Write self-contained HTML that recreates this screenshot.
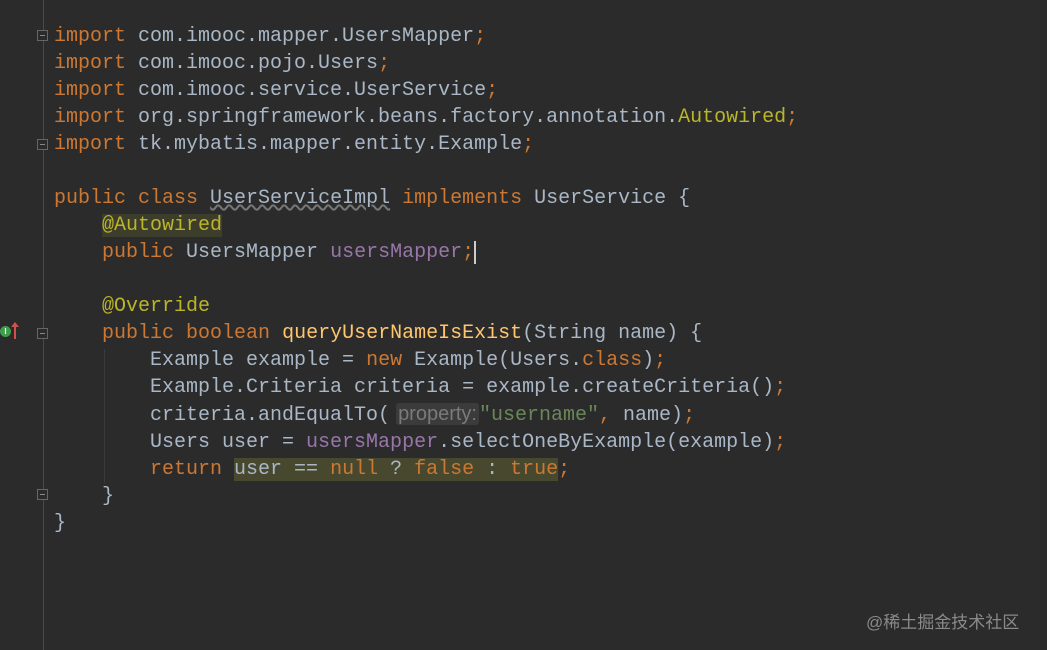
<!DOCTYPE html>
<html><head><meta charset="utf-8"><style>
body{margin:0;width:1047px;height:650px;background:#2b2b2b;overflow:hidden;position:relative}
.g{position:absolute;left:43px;top:0;width:1px;height:650px;background:#4a4a4a}
pre{position:absolute;left:54px;top:23px;margin:0;font-family:"Liberation Mono","DejaVu Sans Mono",monospace;font-size:20px;line-height:27px;color:#a9b7c6}
.k{color:#cc7832}.a{color:#bbb529}.f{color:#9876aa}.s{color:#6a8759}.m{color:#ffc66d}
.hl{background:#3d3d2b}.hr{background:#48482f}
.h{font-family:"Liberation Sans",sans-serif;font-size:20px;color:#7a7a7a;background:#3b3b3b;border-radius:3px;padding:0 2px;margin-left:-6px}
.fold{position:absolute;left:37px;width:11px;height:11px;border:1px solid #666;box-sizing:border-box;background:#2b2b2b}
.fold:after{content:"";position:absolute;left:2px;top:4px;width:5px;height:1px;background:#888}
.w{position:absolute;left:866px;top:608px;font-family:"Liberation Sans","Noto Sans CJK SC",sans-serif;font-size:17px;color:#8a8a8a}
.il{position:absolute;left:104px;width:1px;background:#3a3a3a}
</style></head><body>
<div class="g"></div>
<div class="fold" style="top:30px"></div>
<div class="fold" style="top:139px"></div>
<div class="fold" style="top:328px"></div>
<div class="fold" style="top:489px"></div>
<div class="il" style="top:349px;height:134px"></div>
<div style="position:absolute;left:0;top:326px;width:11px;height:11px;border-radius:50%;background:#3c9e4a;color:#fff;font:bold 8px 'Liberation Sans',sans-serif;text-align:center;line-height:11px">I</div>
<div style="position:absolute;left:14px;top:323px;width:2px;height:16px;background:#d05050"></div>
<div style="position:absolute;left:11px;top:322px;width:0;height:0;border-left:4px solid transparent;border-right:4px solid transparent;border-bottom:5px solid #d05050"></div>
<pre><span class="k">import</span> com.imooc.mapper.UsersMapper<span class="k">;</span>
<span class="k">import</span> com.imooc.pojo.Users<span class="k">;</span>
<span class="k">import</span> com.imooc.service.UserService<span class="k">;</span>
<span class="k">import</span> org.springframework.beans.factory.annotation.<span class="a">Autowired</span><span class="k">;</span>
<span class="k">import</span> tk.mybatis.mapper.entity.Example<span class="k">;</span>

<span class="k">public class</span> <span style="text-decoration:underline wavy #777;color:#a9b7c6">UserServiceImpl</span> <span class="k">implements</span> UserService {
    <span class="a hl">@Autowired</span>
    <span class="k">public</span> UsersMapper <span class="f">usersMapper</span><span class="k">;</span><span style="border-left:2px solid #ccc"></span>

    <span class="a">@Override</span>
    <span class="k">public boolean</span> <span class="m">queryUserNameIsExist</span>(String name) {
        Example example = <span class="k">new</span> Example(Users.<span class="k">class</span>)<span class="k">;</span>
        Example.Criteria criteria = example.createCriteria()<span class="k">;</span>
        criteria.andEqualTo( <span class="h">property:</span><span class="s">"username"</span><span class="k">,</span> name)<span class="k">;</span>
        Users user = <span class="f">usersMapper</span>.selectOneByExample(example)<span class="k">;</span>
        <span class="k">return</span> <span class="hr">user == <span class="k">null</span> ? <span class="k">false</span> : <span class="k">true</span></span><span class="k">;</span>
    }
}</pre>
<div class="w">@稀土掘金技术社区</div>
</body></html>
